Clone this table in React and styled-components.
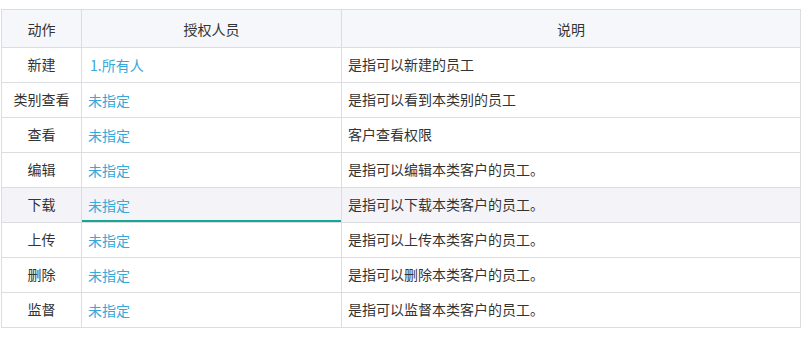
import React from "react";
import styled, { createGlobalStyle } from "styled-components";

const GlobalStyle = createGlobalStyle`
  body {
    margin: 0;
    background: #ffffff;
    font-family: "Noto Sans CJK SC", "Noto Sans", sans-serif;
  }
`;

const Wrapper = styled.div`
  padding: 9px 0 0 1px;
`;

const Grid = styled.div`
  display: grid;
  grid-template-columns: 80px 260px 459px;
  width: 800px;
  box-sizing: border-box;
  border-top: 1px solid #dcdde1;
  border-left: 1px solid #dcdde1;
`;

const Cell = styled.div`
  box-sizing: border-box;
  height: ${(p) => (p.$head ? "38px" : "35px")};
  border-right: 1px solid #dcdde1;
  border-bottom: 1px solid #dcdde1;
  background: ${(p) => (p.$head ? "#f5f7fb" : p.$hover ? "#f4f4f8" : "#ffffff")};
  display: flex;
  align-items: center;
  justify-content: ${(p) => (p.$center ? "center" : "flex-start")};
  padding: ${(p) => (p.$head ? "0 6px" : "0 6px 3px")};
  font-size: 14px;
  line-height: 20px;
  color: #333333;
  white-space: nowrap;
  box-shadow: ${(p) => (p.$active ? "inset 0 -2px 0 #17a595" : "none")};
`;

const Link = styled.span`
  color: #36a8d9;
  padding-top: 2px;
  margin-left: ${(p) => (p.$shift ? "2px" : "0")};
`;

const rows = [
  { action: "新建", who: "1.所有人", desc: "是指可以新建的员工" },
  { action: "类别查看", who: "未指定", desc: "是指可以看到本类别的员工" },
  { action: "查看", who: "未指定", desc: "客户查看权限" },
  { action: "编辑", who: "未指定", desc: "是指可以编辑本类客户的员工。" },
  { action: "下载", who: "未指定", desc: "是指可以下载本类客户的员工。", hover: true },
  { action: "上传", who: "未指定", desc: "是指可以上传本类客户的员工。" },
  { action: "删除", who: "未指定", desc: "是指可以删除本类客户的员工。" },
  { action: "监督", who: "未指定", desc: "是指可以监督本类客户的员工。" },
];

const App = () => (
  <Wrapper>
    <GlobalStyle />
    <Grid>
      <Cell $head $center>动作</Cell>
      <Cell $head $center>授权人员</Cell>
      <Cell $head $center>说明</Cell>
      {rows.map((r) => (
        <React.Fragment key={r.action}>
          <Cell $center $hover={r.hover}>{r.action}</Cell>
          <Cell $hover={r.hover} $active={r.hover}>
            <Link $shift={r.who.startsWith("1.")}>{r.who}</Link>
          </Cell>
          <Cell $hover={r.hover}>{r.desc}</Cell>
        </React.Fragment>
      ))}
    </Grid>
  </Wrapper>
);

export default App;
